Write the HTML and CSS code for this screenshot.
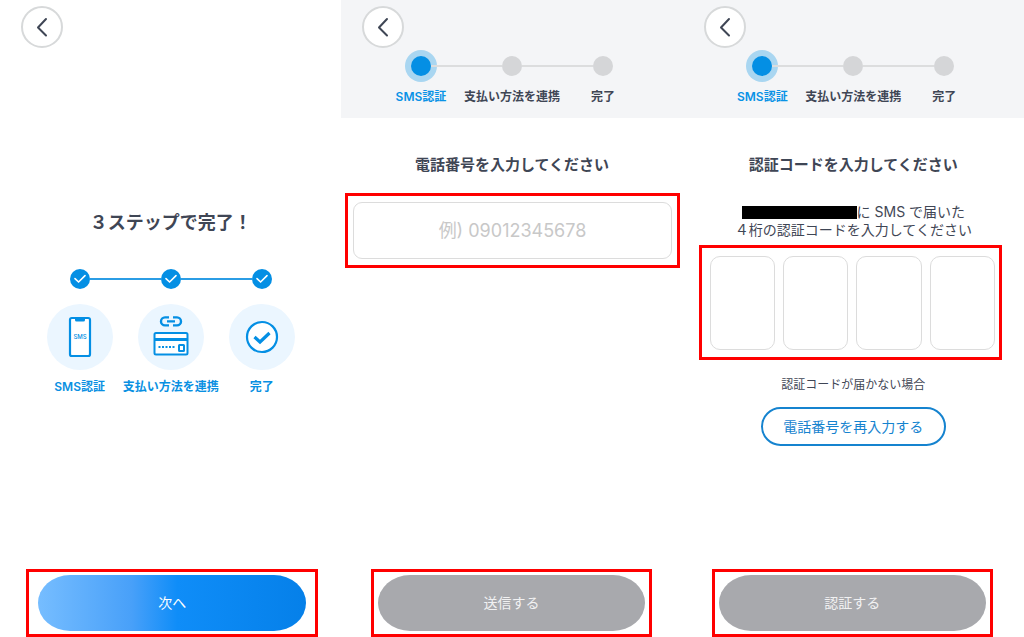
FILE: index.html
```
<!DOCTYPE html>
<html lang="ja">
<head>
  <meta charset="UTF-8">
  <title>SMS認証</title>
  <meta name="viewport" content="width=device-width, initial-scale=1">
  <link rel="stylesheet" href="styles.css">
</head>
<body>
  <main class="screens">

    <!-- intro -->
    <section class="screen">
      <header class="top">
        <button class="back" type="button" aria-label="戻る">
          <svg width="12" height="20" viewBox="0 0 12 20"><path d="M10 2 L2 10.5 L10 18.5"/></svg>
        </button>
      </header>
      <h1 class="intro-title">３ステップで完了！</h1>
      <ol class="steps steps-intro">
        <li class="step">
          <div class="track"><span class="dot"><svg width="12" height="10" viewBox="0 0 12 10"><path d="M1 4.6 L4.6 8 L11 1.6"/></svg></span></div>
          <div class="circle">
            <svg width="24" height="42" viewBox="0 0 24 42" fill="none" stroke="#048fe4" stroke-width="2.2">
              <rect x="2" y="2" width="20" height="38" rx="1.8" fill="#fff"/>
              <path d="M7 2 H17 V4 Q17 5.6 15.4 5.6 H8.6 Q7 5.6 7 4 Z" fill="#048fe4" stroke="none"/>
              <text class="sms" x="12" y="23" text-anchor="middle">SMS</text>
            </svg>
          </div>
          <span class="label">SMS認証</span>
        </li>
        <li class="step">
          <div class="track"><span class="dot"><svg width="12" height="10" viewBox="0 0 12 10"><path d="M1 4.6 L4.6 8 L11 1.6"/></svg></span></div>
          <div class="circle">
            <svg class="card" width="36" height="42" viewBox="0 0 36 42" fill="none" stroke="#048fe4" stroke-width="2">
              <path d="M16 2.4 H12 A4 4 0 0 0 12 10.4 H16 M20 2.4 H24 A4 4 0 0 1 24 10.4 H20 M14 6.4 H22" stroke-width="2.4"/>
              <rect x="1.5" y="18" width="33" height="21.5" rx="1.5" fill="#fff"/>
              <path d="M1 24.5 H35" stroke-width="3.2"/>
              <path d="M5.5 32 H22" stroke-dasharray="2 1.5"/>
              <rect x="26" y="30" width="5" height="6" rx="0.5"/>
            </svg>
          </div>
          <span class="label">支払い方法を連携</span>
        </li>
        <li class="step">
          <div class="track"><span class="dot"><svg width="12" height="10" viewBox="0 0 12 10"><path d="M1 4.6 L4.6 8 L11 1.6"/></svg></span></div>
          <div class="circle">
            <svg width="34" height="34" viewBox="0 0 34 34" fill="none" stroke="#048fe4">
              <circle cx="17" cy="17" r="15" fill="#fff" stroke-width="2.2"/>
              <path d="M9.5 17 L15 22 L24.5 13" stroke-width="3.2"/>
            </svg>
          </div>
          <span class="label">完了</span>
        </li>
      </ol>
      <div class="mark action action-next">
        <button class="btn btn-next" type="button">次へ</button>
      </div>
    </section>

    <!-- phone number -->
    <section class="screen">
      <header class="top top-gray">
        <button class="back" type="button" aria-label="戻る">
          <svg width="12" height="20" viewBox="0 0 12 20"><path d="M10 2 L2 10.5 L10 18.5"/></svg>
        </button>
        <ol class="steps steps-nav">
          <li class="step current"><div class="track"><span class="dot"></span></div><span class="label">SMS認証</span></li>
          <li class="step"><div class="track"><span class="dot"></span></div><span class="label">支払い方法を連携</span></li>
          <li class="step"><div class="track"><span class="dot"></span></div><span class="label">完了</span></li>
        </ol>
      </header>
      <h2 class="title"><label for="phone">電話番号を入力してください</label></h2>
      <div class="mark phone-box">
        <input class="phone" id="phone" type="tel" placeholder="例) 09012345678">
      </div>
      <div class="mark action action-send">
        <button class="btn" type="button">送信する</button>
      </div>
    </section>

    <!-- code -->
    <section class="screen">
      <header class="top top-gray">
        <button class="back" type="button" aria-label="戻る">
          <svg width="12" height="20" viewBox="0 0 12 20"><path d="M10 2 L2 10.5 L10 18.5"/></svg>
        </button>
        <ol class="steps steps-nav">
          <li class="step current"><div class="track"><span class="dot"></span></div><span class="label">SMS認証</span></li>
          <li class="step"><div class="track"><span class="dot"></span></div><span class="label">支払い方法を連携</span></li>
          <li class="step"><div class="track"><span class="dot"></span></div><span class="label">完了</span></li>
        </ol>
      </header>
      <h2 class="title">認証コードを入力してください</h2>
      <p class="lead"><span class="masked"></span>に SMS で届いた<br>４桁の認証コードを入力してください</p>
      <div class="mark code-box">
        <input class="code" type="text" inputmode="numeric" maxlength="1" aria-label="1桁目">
        <input class="code" type="text" inputmode="numeric" maxlength="1" aria-label="2桁目">
        <input class="code" type="text" inputmode="numeric" maxlength="1" aria-label="3桁目">
        <input class="code" type="text" inputmode="numeric" maxlength="1" aria-label="4桁目">
      </div>
      <p class="note">認証コードが届かない場合</p>
      <button class="retry" type="button">電話番号を再入力する</button>
      <div class="mark action action-verify">
        <button class="btn" type="button">認証する</button>
      </div>
    </section>

  </main>
</body>
</html>
```
FILE: styles.css
```
* {
  box-sizing: border-box;
}
body {
  margin: 0;
  background: #fff;
  color: #3f4655;
  font-family: Inter, "Noto Sans CJK JP", sans-serif;
  font-size: 14px;
  line-height: 18px;
}
h1, h2, p, ol {
  margin: 0;
  padding: 0;
}
button, input {
  font: inherit;
}
.screens {
  display: grid;
  grid-template-columns: repeat(3, 1fr);
  min-height: 100vh;
}
.screen {
  display: flex;
  flex-direction: column;
  min-width: 0;
}

/* header */
.top {
  padding: 6px 0 12px;
}
.top-gray {
  background: #f4f5f7;
}
.back {
  display: flex;
  align-items: center;
  justify-content: center;
  width: 42px;
  height: 42px;
  margin-left: 21px;
  padding: 0;
  border: 2px solid #d7d9da;
  border-radius: 50%;
  background: #fff;
}
.back path {
  fill: none;
  stroke: #3f4655;
  stroke-width: 2;
  stroke-linecap: round;
  stroke-linejoin: round;
}

/* steps */
.steps {
  display: grid;
  grid-template-columns: repeat(3, 1fr);
  width: 80%;
  margin: 0 auto;
  list-style: none;
}
.step {
  display: flex;
  flex-direction: column;
  align-items: center;
  min-width: 0;
}
.track {
  display: flex;
  align-items: center;
  width: 100%;
}
.track::before, .track::after {
  content: "";
  flex: 1;
  height: 2px;
  background: #dcddde;
}
.step:first-child .track::before,
.step:last-child .track::after {
  background: none;
}
.dot {
  display: flex;
  align-items: center;
  justify-content: center;
  width: 20px;
  height: 20px;
  border-radius: 50%;
  background: #d5d6d8;
}
.label {
  font-size: 12px;
  font-weight: 600;
  white-space: nowrap;
}
.steps-nav {
  margin-top: 2px;
}
.steps-nav .track {
  height: 32px;
  margin-bottom: 6px;
}
.current .dot {
  background: #048fe4;
  box-shadow: 0 0 0 6px #a9d6f1;
}
.current .label {
  color: #0992e6;
}
.steps-intro .track::before, .steps-intro .track::after {
  background: #2b9de5;
}
.steps-intro .dot {
  background: #048fe4;
}
.dot path {
  fill: none;
  stroke: #fff;
  stroke-width: 1.6;
  stroke-linecap: round;
}
.circle {
  display: flex;
  align-items: center;
  justify-content: center;
  width: 66px;
  height: 66px;
  margin: 15px 0 8px;
  border-radius: 50%;
  background: #ebf6ff;
}
.card {
  margin-bottom: 2px;
}
.sms {
  fill: #048fe4;
  stroke: none;
  font-size: 6px;
  font-weight: 500;
}
.steps-intro .label {
  color: #0990e2;
}

/* text */
.intro-title {
  margin: 151px 0 34px;
  font-size: 18px;
  line-height: 24px;
  text-align: center;
}
.title {
  margin-top: 35px;
  font-size: 15px;
  line-height: 24px;
  text-align: center;
}
.lead {
  margin-top: 26px;
  text-align: center;
}
.masked {
  display: inline-block;
  width: 115px;
  height: 13px;
  background: #000;
  vertical-align: -2px;
}
.note {
  margin-top: 16px;
  font-size: 12px;
  text-align: center;
}

/* red frames */
.mark {
  border: 3px solid #f00;
}
.phone-box {
  margin: 16px 3px 0 4px;
  padding: 6px 5px;
}
.phone {
  display: block;
  width: 100%;
  height: 57px;
  border: 1px solid #dcdcdc;
  border-radius: 9px;
  background: #fff;
  font-size: 18px;
  text-align: center;
}
.phone::placeholder {
  color: #c8c8c8;
}
.code-box {
  display: grid;
  grid-template-columns: repeat(4, 1fr);
  gap: 8px;
  margin: 6px 22px 0 16px;
  padding: 8px 4px 7px 8px;
}
.code {
  width: 100%;
  min-width: 0;
  height: 94px;
  border: 1px solid #dcdcdc;
  border-radius: 10px;
  background: #fff;
  font-size: 24px;
  text-align: center;
}

/* buttons */
.retry {
  align-self: center;
  width: 185px;
  height: 39px;
  margin-top: 13px;
  padding: 0;
  border: 2px solid #1583cf;
  border-radius: 20px;
  background: #fff;
  color: #1583cf;
}
.action {
  margin-top: auto;
}
.action-next {
  margin-left: 26px;
  margin-right: 23px;
  padding: 3px 9px;
}
.action-send {
  margin-left: 30px;
  margin-right: 31px;
  padding: 3px 4px;
}
.action-verify {
  margin-left: 29px;
  margin-right: 31px;
  padding: 3px 4px;
}
.btn {
  display: block;
  width: 100%;
  height: 56px;
  border: 0;
  border-radius: 32px / 28px;
  background: #a8a9ad;
  color: #f1f1f2;
}
.btn-next {
  background: linear-gradient(90deg, #76bdff, #48a0f9 35%, #0f8df8 52%, #0580e9);
  color: #fff;
}
```
